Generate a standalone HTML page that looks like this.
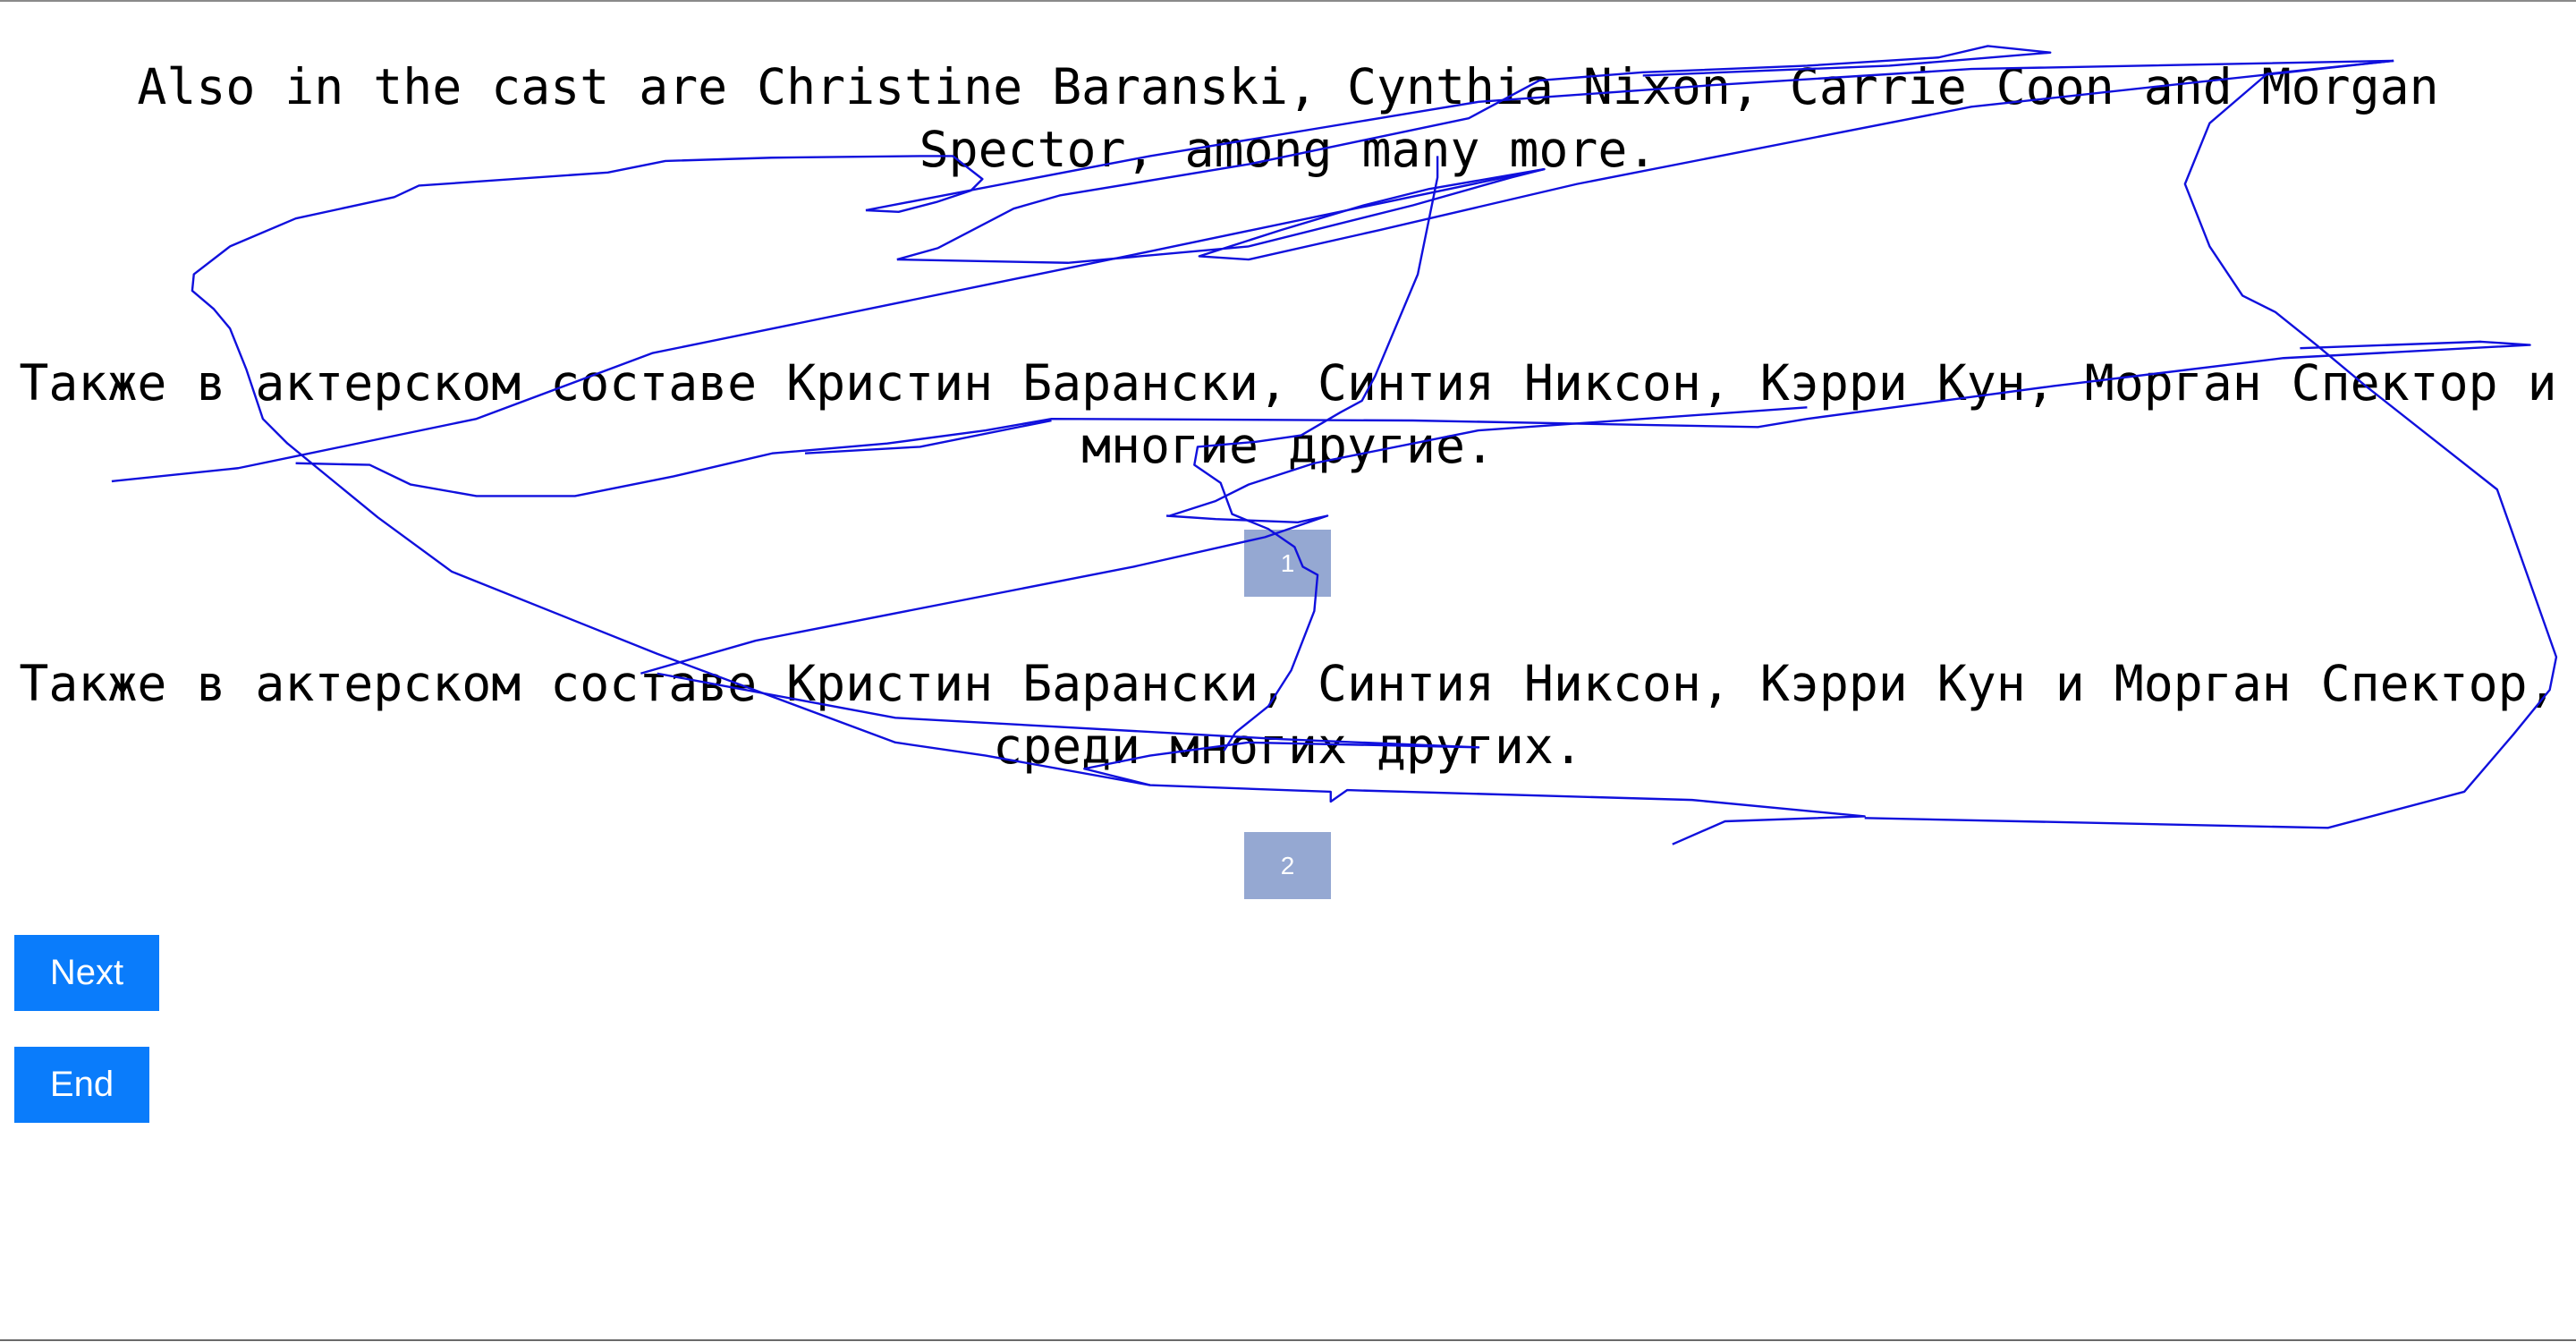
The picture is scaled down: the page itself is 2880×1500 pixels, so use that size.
<!DOCTYPE html>
<html><head><meta charset="utf-8"><style>
html,body{margin:0;padding:0;width:2880px;height:1500px;overflow:hidden;background:#fff;}
body{position:relative;}
.t{position:absolute;left:8px;width:2864px;text-align:center;font-family:"DejaVu Sans Mono","Liberation Mono",monospace;font-size:54.8px;line-height:70px;color:#000;white-space:normal;}
.box{position:absolute;left:1391px;width:97px;height:75px;background:#95a8d2;color:#fff;font-family:"Liberation Sans",Arial,sans-serif;font-size:28px;display:flex;align-items:center;justify-content:center;}
.btn{position:absolute;left:16px;height:85px;background:#0a7cfb;color:#fff;font-family:"Liberation Sans",Arial,sans-serif;font-size:40px;display:flex;align-items:center;justify-content:center;}
.bt{position:absolute;left:0;width:2880px;height:2px;background:#8a8a8a;}
svg{position:absolute;left:0;top:0;}
</style></head><body>
<div class="bt" style="top:0"></div>
<div class="bt" style="top:1497px;background:#6a6a6a"></div>
<div class="t" style="top:62px">Also in the cast are Christine Baranski, Cynthia Nixon, Carrie Coon and Morgan Spector, among many more.</div>
<div class="t" style="top:393px">Также в актерском составе Кристин Барански, Синтия Никсон, Кэрри Кун, Морган Спектор и многие другие.</div>
<div class="box" style="top:592px">1</div>
<div class="t" style="top:729px">Также в актерском составе Кристин Барански, Синтия Никсон, Кэрри Кун и Морган Спектор, среди многих других.</div>
<div class="box" style="top:930px">2</div>
<div class="btn" style="top:1045px;width:162px">Next</div>
<div class="btn" style="top:1170px;width:151px">End</div>
<svg width="2880" height="1500" viewBox="0 0 1568 817" preserveAspectRatio="none">
<g fill="none" stroke="#1010dd" stroke-width="2.4" vector-effect="non-scaling-stroke" stroke-linejoin="round">
<polyline vector-effect="non-scaling-stroke" points="527,128 547,129 570,123 591,116 598,109 580,95 560,95 470,96 405,98 370,105 255,113 240,120 180,133 140,150 118,167 117,177 130,188 140,200 150,225 160,255 175,270 230,315 275,348 400,398 545,452 600,460 700,478 810,482 810,488 820,481 1030,487 1135,497 1050,500 1018,514"/>
<polyline vector-effect="non-scaling-stroke" points="527,128 700,95 900,62 1040,52 1200,42 1457,37"/>
<polyline vector-effect="non-scaling-stroke" points="546,158 571,151 617,127 645,119 760,100 894,72 937,49 1000,44 1100,40 1180,35 1210,28 1248,32 1200,36 1150,40 1000,46"/>
<polyline vector-effect="non-scaling-stroke" points="68,293 145,285 290,255 397,215 700,153 940,103"/>
<polyline vector-effect="non-scaling-stroke" points="546,158 650,160 760,150 860,125 920,108 940,103 870,115 830,125 780,140 730,156 760,158 840,140 960,112 1200,65 1457,37"/>
<polyline vector-effect="non-scaling-stroke" points="1457,37 1380,45 1345,75 1330,112 1345,150 1365,180 1385,190 1410,210 1440,235 1520,298 1556,400 1552,420 1530,447 1500,482 1417,504 1135,498"/>
<polyline vector-effect="non-scaling-stroke" points="875,95 875,108 863,167 837,229 829,244 816,251 792,265 764,269 729,272 727,283 743,294 750,313 772,322 788,333 793,345 802,350 800,372 786,408 772,430 752,446 745,457"/>
<polyline vector-effect="non-scaling-stroke" points="180,282 225,283 250,295 290,302 350,302 410,290 470,276 540,270 600,262 640,255 860,256 1070,260 1100,255 1250,235 1390,218 1540,210 1510,208 1400,212"/>
<polyline vector-effect="non-scaling-stroke" points="490,276 560,272 640,256"/>
<polyline vector-effect="non-scaling-stroke" points="710,314 740,316 790,318 808,314 770,327 690,345 460,390 390,410"/>
<polyline vector-effect="non-scaling-stroke" points="712,314 740,305 760,295 800,282 900,262 1100,248"/>
<polyline vector-effect="non-scaling-stroke" points="400,410 545,437 780,450 900,455 760,452 700,460 660,468 700,478"/>
</g></svg>
</body></html>
